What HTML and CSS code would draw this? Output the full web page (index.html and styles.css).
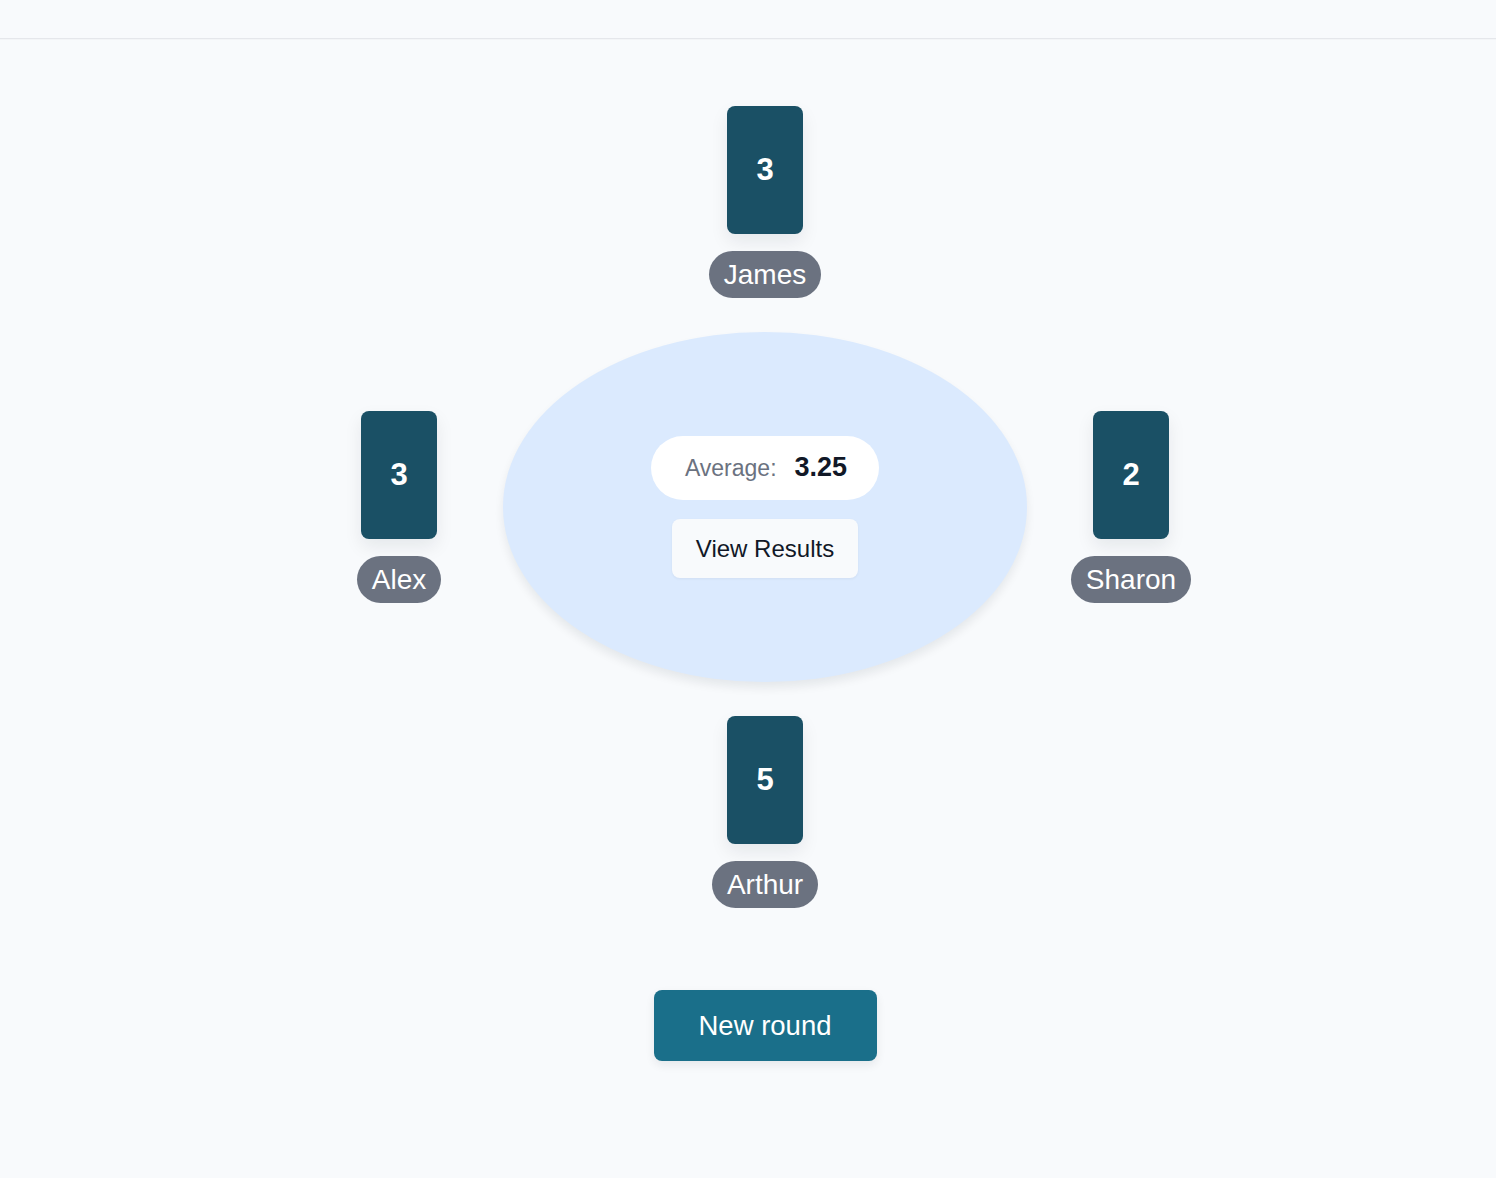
FILE: index.html
```html
<!DOCTYPE html>
<html lang="en">
<head>
  <meta charset="UTF-8" />
  <title>Planning Poker</title>
  <link rel="stylesheet" href="styles.css">
</head>
<body>

  <header class="topbar"></header>

  <main class="room">
    <div class="table-grid">
      <div class="player top">
        <div class="card">3</div>
        <span class="name">James</span>
      </div>

      <div class="player left">
        <div class="card">3</div>
        <span class="name">Alex</span>
      </div>

      <div class="table">
        <div class="average">
          <span class="avg-label">Average:</span>
          <span class="avg-value">3.25</span>
        </div>
        <button class="results-btn">View Results</button>
      </div>

      <div class="player right">
        <div class="card">2</div>
        <span class="name">Sharon</span>
      </div>

      <div class="player bottom">
        <div class="card">5</div>
        <span class="name">Arthur</span>
      </div>
    </div>

    <button class="new-round">New round</button>
  </main>

</body>
</html>
```

FILE: styles.css
```css
body {
  margin: 0;
  background: #f8fafc;
  color: #111827;
  font-family: 'Liberation Sans', Arial, sans-serif;
}

.topbar {
  height: 38px;
  border-bottom: 1px solid #e5e7eb;
  box-shadow: 0 1px 1px rgba(0,0,0,0.02);
}

.room {
  display: flex;
  flex-direction: column;
  align-items: center;
  padding: 67px 0 80px 34px;
}

.table-grid {
  display: grid;
  grid-template-columns: 120px 524px 120px;
  column-gap: 44px;
  row-gap: 34px;
  align-items: center;
  justify-items: center;
}

.player {
  display: flex;
  flex-direction: column;
  align-items: center;
  gap: 17px;
}

.player.top { grid-column: 2; grid-row: 1; }
.player.left { grid-column: 1; grid-row: 2; }
.player.right { grid-column: 3; grid-row: 2; }
.player.bottom { grid-column: 2; grid-row: 3; }

.card {
  width: 76px;
  height: 128px;
  border-radius: 8px;
  background: #1a5065;
  color: #fff;
  font-size: 31px;
  font-weight: bold;
  display: flex;
  align-items: center;
  justify-content: center;
  box-shadow: 0 8px 18px rgba(15,23,42,0.08);
}

.name {
  background: #6b7280;
  color: #fff;
  font-size: 28px;
  line-height: 33px;
  padding: 7px 15px;
  border-radius: 999px;
}

.table {
  grid-column: 2;
  grid-row: 2;
  width: 524px;
  height: 350px;
  border-radius: 50%;
  background: #dbeafe;
  box-shadow: 0 6px 10px rgba(15,23,42,0.08);
  display: flex;
  flex-direction: column;
  align-items: center;
  justify-content: center;
  gap: 19px;
}

.average {
  background: #fff;
  border-radius: 999px;
  padding: 14px 32px 14px 34px;
  line-height: 35px;
  display: flex;
  align-items: baseline;
  gap: 18px;
}

.avg-label {
  color: #6b7280;
  font-size: 23px;
}

.avg-value {
  font-size: 27px;
  font-weight: bold;
  color: #111827;
}

.results-btn {
  font-family: inherit;
  font-size: 24px;
  color: #111827;
  background: #f8fafc;
  border: none;
  border-radius: 8px;
  padding: 0 24px;
  height: 59px;
  box-shadow: 0 1px 3px rgba(15,23,42,0.05);
  cursor: pointer;
}

.new-round {
  margin-top: 82px;
  font-family: inherit;
  font-size: 27.5px;
  line-height: 31px;
  color: #fff;
  background: #1a6f8a;
  border: none;
  border-radius: 8px;
  padding: 20px 45px;
  box-shadow: 0 4px 10px rgba(15,23,42,0.08);
  cursor: pointer;
}

.new-round:hover {
  background: #1e7c99;
}
```
